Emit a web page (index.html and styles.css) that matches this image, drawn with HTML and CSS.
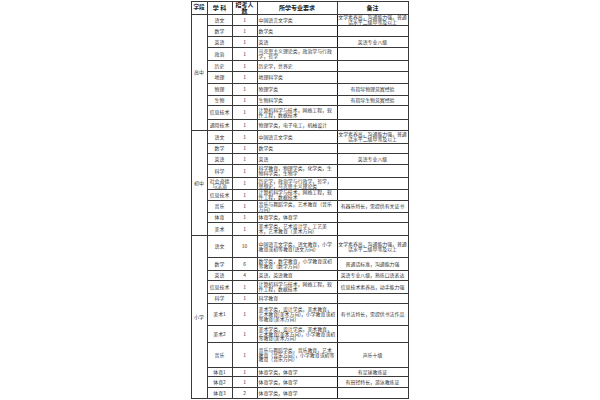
FILE: index.html
```html
<!DOCTYPE html>
<html lang="zh">
<head>
<meta charset="utf-8">
<title>招考计划</title>
<link rel="stylesheet" href="styles.css">
</head>
<body>
<div class="page">
<table class="plan">
  <colgroup>
    <col class="c-stage"><col class="c-subj"><col class="c-num"><col class="c-major"><col class="c-note">
  </colgroup>
  <thead>
    <tr class="h13"><th class="stage-h">学段</th><th>学 科</th><th>招考人数</th><th>所学专业要求</th><th>备注</th></tr>
  </thead>
  <tbody>
    <tr class="h11"><td class="stage" rowspan="10">高中</td><td>语文</td><td>1</td><td class="major">中国语言文学类</td><td class="note">文学素养高，沟通能力强，普通话水平二级甲等及以上</td></tr>
    <tr class="h11"><td>数学</td><td>1</td><td class="major">数学类</td><td class="note"></td></tr>
    <tr class="h11"><td>英语</td><td>1</td><td class="major">英语</td><td class="note">英语专业八级</td></tr>
    <tr class="h13"><td>政治</td><td>1</td><td class="major">马克思主义理论类，政治学与行政学，哲学</td><td class="note"></td></tr>
    <tr class="h11"><td>历史</td><td>1</td><td class="major">历史学，世界史</td><td class="note"></td></tr>
    <tr class="h12"><td>地理</td><td>1</td><td class="major">地理科学类</td><td class="note"></td></tr>
    <tr class="h12"><td>物理</td><td>1</td><td class="major">物理学类</td><td class="note">有指导物理竞赛经验</td></tr>
    <tr class="h10"><td>生物</td><td>1</td><td class="major">生物科学类</td><td class="note">有指导生物竞赛经验</td></tr>
    <tr class="h14"><td>信息技术</td><td>1</td><td class="major">计算机科学与技术，网络工程，软件工程，数据技术</td><td class="note"></td></tr>
    <tr class="h11"><td>通用技术</td><td>1</td><td class="major">物理学类，电子电工，机械设计</td><td class="note"></td></tr>

    <tr class="h13"><td class="stage" rowspan="9">初中</td><td>语文</td><td>1</td><td class="major">中国语言文学类</td><td class="note">文学素养高，沟通能力强，普通话水平二级甲等及以上</td></tr>
    <tr class="h10"><td>数学</td><td>1</td><td class="major">数学类</td><td class="note"></td></tr>
    <tr class="h11"><td>英语</td><td>1</td><td class="major">英语</td><td class="note">英语专业八级</td></tr>
    <tr class="h13"><td>科学</td><td>1</td><td class="major">科学教育，物理学类，化学类，生物科学类，生物学</td><td class="note"></td></tr>
    <tr class="h12"><td>社会道德与法治</td><td>1</td><td class="major">历史学，政治学与行政学，哲学，思想史，马克思主义理论类</td><td class="note"></td></tr>
    <tr class="h11"><td>信息技术</td><td>1</td><td class="major">计算机科学与技术，网络工程，软件工程，数据技术</td><td class="note"></td></tr>
    <tr class="h12"><td>音乐</td><td>1</td><td class="major">音乐与舞蹈学类，艺术教育（音乐方向）</td><td class="note">有器乐特长，需提供有关证书</td></tr>
    <tr class="h10"><td>体育</td><td>1</td><td class="major">体育学类，体育学</td><td class="note"></td></tr>
    <tr class="h13"><td>美术</td><td>1</td><td class="major">美术学类，艺术设计学，工艺美术，艺术教育（美术方向）</td><td class="note"></td></tr>

    <tr class="h22"><td class="stage" rowspan="11">小学</td><td>语文</td><td>10</td><td class="major">中国语言文学类，语文教育，小学教育或初等教育(语文方向)</td><td class="note">文学素养高，沟通能力强，普通话水平二级甲等及以上</td></tr>
    <tr class="h13"><td>数学</td><td>6</td><td class="major">数学类，数学教育，小学教育或初等教育（数学方向）</td><td class="note">普通话标准，沟通能力强</td></tr>
    <tr class="h10"><td>英语</td><td>4</td><td class="major">英语，英语教育</td><td class="note">英语专业八级，熟练口语表达</td></tr>
    <tr class="h13"><td>信息技术</td><td>1</td><td class="major">计算机科学与技术，网络工程，软件工程，数据技术</td><td class="note">信息技术素养高，动手能力强</td></tr>
    <tr class="h10"><td>科学</td><td>1</td><td class="major">科学教育</td><td class="note"></td></tr>
    <tr class="h22"><td>美术1</td><td>1</td><td class="major">美术学类，设计学类，美术教育，艺术教育(美术方向)，小学教育或初等教育(美术方向)</td><td class="note">有书法特长，需提供书法作品</td></tr>
    <tr class="h17"><td>美术2</td><td>1</td><td class="major">美术学类，设计学类，美术教育，艺术教育(美术方向)，小学教育或初等教育(美术方向)</td><td class="note"></td></tr>
    <tr class="h25"><td>音乐</td><td>1</td><td class="major">音乐与舞蹈学类，音乐教育，艺术教育（音乐方向），小学教育或初等教育（音乐方向）</td><td class="note">声乐十级</td></tr>
    <tr class="h9"><td>体育1</td><td>1</td><td class="major">体育学类，体育学</td><td class="note">有足球教练证</td></tr>
    <tr class="h11"><td>体育2</td><td>1</td><td class="major">体育学类，体育学</td><td class="note">有田径特长，游泳教练证</td></tr>
    <tr class="h11"><td>体育3</td><td>2</td><td class="major">体育学类，体育学</td><td class="note"></td></tr>
  </tbody>
</table>
</div>
</body>
</html>
```
FILE: styles.css
```css
html, body {
  margin: 0;
  padding: 0;
  background: #ffffff;
}
.page {
  padding-top: 1px;
  display: flex;
  justify-content: center;
}
.plan {
  width: 217px;
  table-layout: fixed;
  border-collapse: collapse;
  border: 1px solid #1a1a1a;
  font-family: "Noto Sans CJK SC", "Noto Sans", sans-serif;
  font-size: 4.9px;
  line-height: 4.7px;
  color: #333333;
  margin-left: -1px;
}
.c-stage { width: 16px; }
.c-subj { width: 25px; }
.c-num { width: 25px; }
.c-major { width: 80px; }
.c-note { width: 71px; }
.plan th, .plan td {
  border: 1px solid #3a3a3a;
  padding: 0 1px;
  text-align: center;
  vertical-align: middle;
  overflow: hidden;
}
.plan th {
  font-size: 6px;
  line-height: 5.6px;
  font-weight: 700;
  color: #1a1a1a;
}
.plan th.stage-h {
  font-size: 5.6px;
}
.plan td.major {
  text-align: left;
  border-left-color: #1a1a1a;
  border-right-color: #1a1a1a;
}
.plan td.note {
  padding: 0;
}
.plan td.stage {
  padding: 0;
}
.h9 { height: 9px; }
.h10 { height: 10px; }
.h11 { height: 11px; }
.h12 { height: 12px; }
.h13 { height: 13px; }
.h14 { height: 14px; }
.h17 { height: 17px; }
.h22 { height: 22px; }
.h25 { height: 25px; }
```
